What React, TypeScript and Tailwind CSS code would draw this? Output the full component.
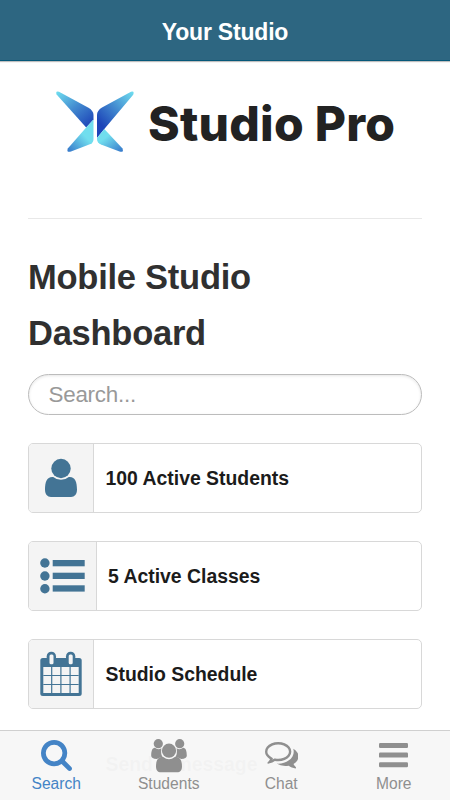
import React, { useState } from "react"

const UserIcon = () => (
    <svg className="block w-[44px] h-[46px]" viewBox="0 0 44 46" fill="#437495">
        <circle cx="22" cy="13.500" r="9.700" />
        <path d="M14.200 22Q17.400 24.800 22 24.800T29.800 22C36 21.400 38 26.700 38 34.500C38 39.200 35.600 42 32 42H12C8.400 42 6 39.200 6 34.500C6 26.700 8 21.400 14.200 22Z" />
    </svg>
)

const ListIcon = () => (
    <svg className="block w-[45px] h-[36px]" viewBox="0 0 45 36" fill="#437495">
        <circle cx="4.900" cy="5" r="4.700" />
        <circle cx="4.900" cy="18" r="4.700" />
        <circle cx="4.900" cy="30.700" r="4.700" />
        <rect x="12.700" y="2" width="32" height="6.300" />
        <rect x="12.700" y="14.700" width="32" height="6.300" />
        <rect x="12.700" y="27.300" width="32" height="6.300" />
    </svg>
)

const CalendarIcon = () => (
    <svg className="block w-[42px] h-[46px]" viewBox="0 0 42 46">
        <rect x="0.300" y="7" width="41.400" height="38" rx="2.500" fill="#437495" />
        <rect x="6.700" y="0.700" width="9.300" height="14" rx="4.500" fill="#437495" />
        <rect x="26" y="0.700" width="9.300" height="14" rx="4.500" fill="#437495" />
        <rect x="9.500" y="3.500" width="4" height="9.800" rx="1.500" fill="#f4f4f4" />
        <rect x="28.700" y="3.500" width="4" height="9.800" rx="1.500" fill="#f4f4f4" />
        <rect x="3.300" y="16" width="35.400" height="26" fill="#f4f4f4" />
        <path d="M11.700 16V42M20.900 16V42M30.100 16V42M3.300 24.500H38.700M3.300 33.500H38.700" stroke="#437495" strokeWidth="1.200" />
    </svg>
)

const SearchIcon = () => (
    <svg className="block w-[31px] h-[31px]" viewBox="64 128 1664 1664" fill="currentColor">
        <path d="M1216 832q0-185-131.500-316.500t-316.500-131.500-316.500 131.500-131.500 316.500 131.500 316.500 316.500 131.500 316.500-131.500 131.500-316.500zm512 832q0 52-38 90t-90 38q-54 0-90-38l-343-342q-179 124-399 124-143 0-273.500-55.500t-225-150-150-225-55.500-273.500 55.500-273.500 150-225 225-150 273.500-55.500 273.500 55.500 225 150 150 225 55.500 273.500q0 220-124 399l343 343q37 37 37 90z" />
    </svg>
)

const StudentsIcon = () => (
    <svg className="block w-[36px] h-[34px]" viewBox="0 0 36 34" fill="currentColor">
        <circle cx="7.300" cy="4.700" r="4.600" />
        <circle cx="28.700" cy="4.700" r="4.600" />
        <path d="M3.800 8.800Q7.300 11.500 10.400 9.200Q9.200 15.500 12.200 18.600Q8.500 18.500 5.800 20Q0.200 19.800 0.200 16.700C0.200 12 1.200 9 3.800 8.800Z" />
        <path d="M32.200 8.800Q28.700 11.500 25.600 9.200Q26.800 15.500 23.800 18.600Q27.500 18.500 30.200 20Q35.800 19.800 35.800 16.700C35.800 12 34.800 9 32.200 8.800Z" />
        <circle cx="18" cy="11.700" r="7.100" />
        <path d="M12.200 18.100Q18 22.500 23.800 18.100C29 17.800 31 21.500 31 27.500C31 31.300 29.300 33.300 26 33.300H10C6.700 33.300 5 31.300 5 27.500C5 21.500 7 17.800 12.200 18.100Z" />
    </svg>
)

const ChatIcon = () => (
    <svg className="block w-[33.500px] h-[26.500px]" viewBox="0 256 1792 1408" fill="currentColor">
        <path d="M704 384q-153 0-286 52t-211.500 141-78.500 191q0 82 53 158t149 132l97 56-35 84q34-20 62-39l44-31 53 10q78 14 153 14 153 0 286-52t211.500-141 78.500-191-78.500-191-211.500-141-286-52zm0-128q191 0 353.500 68.500t256.500 186.500 94 257-94 257-256.500 186.500-353.500 68.500q-86 0-176-16-124 88-278 128-36 9-86 16h-3q-11 0-20.500-8t-11.500-21q-1-3-1-6.500t.5-6.500 2-6l2.500-5 3.500-5.500 4-5 4.500-5 4-4.500q5-6 23-25t26-29.500 22.500-29 25-38.500 20.500-44q-124-72-195-177t-71-224q0-139 94-257t256.500-186.500 353.500-68.500zm822 1169q10 24 20.500 44t25 38.500 22.500 29 26 29.500 23 25q1 1 4 4.500t4.500 5 4 5 3.500 5.500l2.500 5 2 6 .5 6.500-1 6.500q-3 14-13 22t-22 7q-50-7-86-16-154-40-278-128-90 16-176 16-271 0-472-132 58 4 88 4 161 0 309-45t264-129q125-92 192-212t67-254q0-77-23-152 129 71 204 178t75 230q0 120-71 224.500t-195 176.500z" />
    </svg>
)

const MoreIcon = () => (
    <svg className="block w-[29px] h-[25px]" viewBox="0 0 29 25" fill="currentColor">
        <rect x="0" y="0" width="29" height="5" rx="1.200" />
        <rect x="0" y="9.600" width="29" height="5" rx="1.200" />
        <rect x="0" y="19.200" width="29" height="5" rx="1.200" />
    </svg>
)

const Logo = () => (
    <svg className="block w-[80px] h-[62px]" viewBox="0 0 80 62">
        <defs>
            <linearGradient id="leftWing" x1="0" y1="0" x2="0.850" y2="1">
                <stop offset="0" stopColor="#70dff0" />
                <stop offset="0.500" stopColor="#438bd0" />
                <stop offset="1" stopColor="#1d45b8" />
            </linearGradient>
            <linearGradient id="rightWing" x1="1" y1="0" x2="0.150" y2="1">
                <stop offset="0" stopColor="#70dff0" />
                <stop offset="0.450" stopColor="#438bd0" />
                <stop offset="0.850" stopColor="#1d45b8" />
            </linearGradient>
            <linearGradient id="leftTail" x1="0.800" y1="0.200" x2="0.100" y2="1">
                <stop offset="0.300" stopColor="#71deee" />
                <stop offset="1" stopColor="#397dcc" />
            </linearGradient>
            <linearGradient id="rightTail" x1="0.200" y1="0.200" x2="0.900" y2="1">
                <stop offset="0.200" stopColor="#71deee" />
                <stop offset="1" stopColor="#397dcc" />
            </linearGradient>
        </defs>
        <path d="M4 0.800L33 16.500Q38.500 19.500 38.500 24V28.500L31.200 36.500L1.600 3.500Q0.200 -0.200 4 0.800Z" fill="url(#leftWing)" />
        <path d="M38.500 28.500V48Q38.500 51.500 35.500 53L16 60.600Q10.800 61.800 13 57.200L31.200 36.500Z" fill="url(#leftTail)" />
        <path d="M76 0.800L47 16.500Q42 19.500 42 24V47L49.300 38L78.200 3.800Q79.800 -0.200 76 0.800Z" fill="url(#rightWing)" />
        <path d="M49.300 38L67.300 57.200Q69.400 61.800 64.500 60.600L46 53.500Q42 51.500 42 48V47Z" fill="url(#rightTail)" />
    </svg>
)

const items = [
    { label: '100 Active Students', icon: <UserIcon />, box: 'h-[70px]', cell: 'w-[65px]', text: 'pl-[11.500px]' },
    { label: '5 Active Classes', icon: <ListIcon />, box: 'h-[70px]', cell: 'w-[68px]', text: 'pl-[11px]' },
    { label: 'Studio Schedule', icon: <CalendarIcon />, box: 'h-[70px]', cell: 'w-[65px]', text: 'pl-[11.500px]' },
    { label: 'Send a message', icon: null, box: 'h-[54px]', cell: 'w-[65px]', text: 'pl-[11.500px]' },
]

const tabs = [
    { name: 'Search', icon: <SearchIcon /> },
    { name: 'Students', icon: <StudentsIcon /> },
    { name: 'Chat', icon: <ChatIcon /> },
    { name: 'More', icon: <MoreIcon /> },
]

const App = () => {
    const [search, setSearch] = useState<string>('');
    const [active, setActive] = useState<string>('Search');

    return (
        <div className="relative h-[800px] w-full overflow-hidden bg-white font-['Liberation_Sans',Arial,sans-serif]">
            <header className="h-[61px] bg-[#2d6681] border-b border-[#065879] shadow-[0_1px_1px_rgba(0,0,0,0.25)] flex items-center justify-center">
                <h1 className="text-[23px] tracking-[-0.200px] leading-7 font-bold text-white pt-[3px]">Your Studio</h1>
            </header>

            <main className="px-7">
                <div className="flex items-start h-[157px] pt-[30px] pl-[27px]">
                    <Logo />
                    <span className="ml-[13px] mt-[3px] whitespace-nowrap font-['Inter',sans-serif] font-extrabold text-[48px] leading-[60px] tracking-[0.250px] text-[#222]">Studio Pro</span>
                </div>
                <hr className="border-[#e8e8e8]" />

                <h2 className="mt-[30px] w-[260px] text-[34.500px] leading-[56px] tracking-[-0.250px] font-bold text-[#303030]">Mobile Studio Dashboard</h2>

                <input
                    className="block mt-[13px] w-full h-[41px] rounded-full border border-[#bcbcbc] px-[19.500px] text-[22.400px] tracking-[-0.250px] text-[#333] placeholder:text-[#999] shadow-[inset_0_1px_3px_rgba(0,0,0,0.1)] focus:outline-none"
                    type="text"
                    placeholder="Search..."
                    value={search}
                    onChange={e => setSearch(e.target.value)}
                />

                <div className="flex flex-col gap-7 mt-[28px]">
                    {items.map(item => (
                        <div key={item.label} className={`${item.box} flex shrink-0 rounded-[5px] border border-[#d8d8d8] overflow-hidden`}>
                            <div className={`${item.cell} shrink-0 flex items-center justify-center bg-[#f4f4f4] border-r border-[#d8d8d8]`}>
                                {item.icon}
                            </div>
                            <div className={`${item.text} flex items-center pt-[2px] text-[19.400px] font-bold text-[#1b1b1b]`}>{item.label}</div>
                        </div>
                    ))}
                </div>
            </main>

            <nav className="absolute bottom-0 left-0 w-full h-[70px] grid grid-cols-4 bg-[#f7f7f7]/98 border-t border-[#d0d0d0]">
                {tabs.map(tab => (
                    <button
                        key={tab.name}
                        onClick={() => setActive(tab.name)}
                        className={`flex flex-col items-center ${active === tab.name ? 'text-[#4484c6]' : 'text-[#8f8f8f]'}`}
                    >
                        <span className="flex h-[44px] pt-[5px] items-center justify-center">{tab.icon}</span>
                        <span className="text-[15.600px] leading-[18px]">{tab.name}</span>
                    </button>
                ))}
            </nav>
        </div>
    )
}

export default App
